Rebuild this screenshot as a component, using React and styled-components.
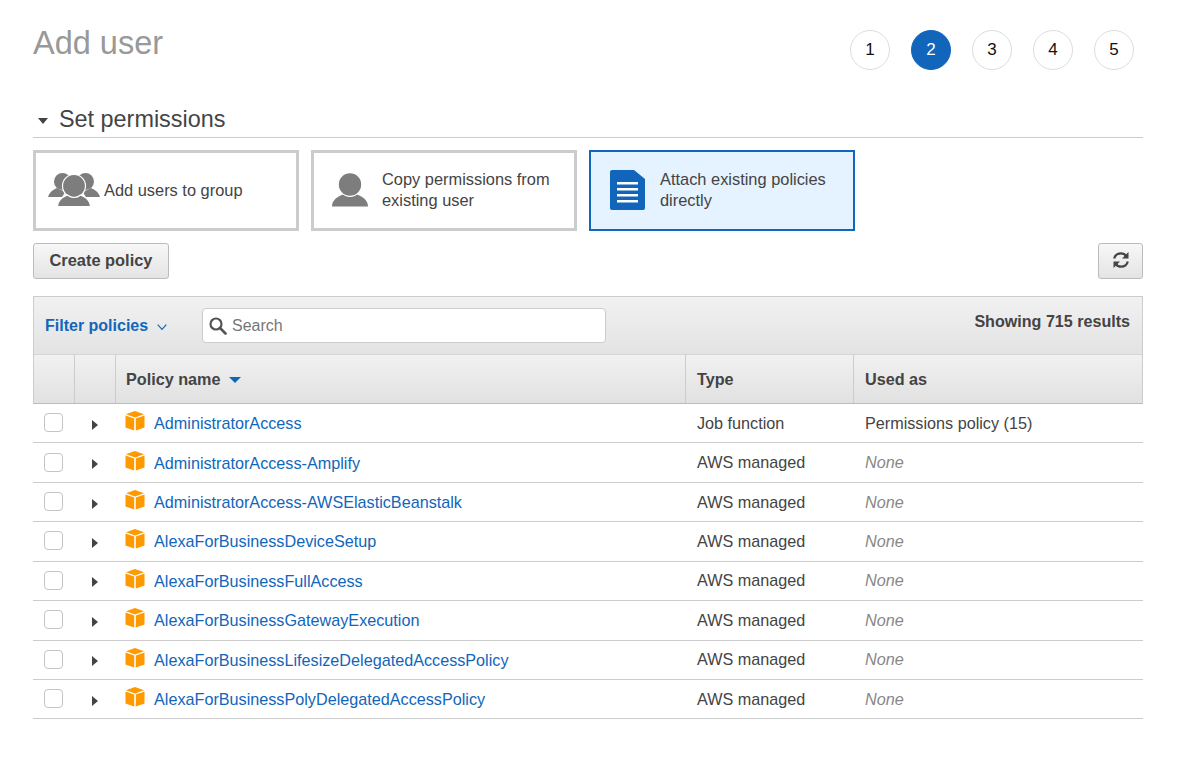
import React from 'react';
import styled, { createGlobalStyle } from 'styled-components';

const GlobalStyle = createGlobalStyle`
  html, body {
    margin: 0;
    padding: 0;
    background: #fff;
    font-family: "Liberation Sans", Arial, sans-serif;
  }
`;

const policies = [
  ['AdministratorAccess', 'Job function', 'Permissions policy (15)'],
  ['AdministratorAccess-Amplify', 'AWS managed', null],
  ['AdministratorAccess-AWSElasticBeanstalk', 'AWS managed', null],
  ['AlexaForBusinessDeviceSetup', 'AWS managed', null],
  ['AlexaForBusinessFullAccess', 'AWS managed', null],
  ['AlexaForBusinessGatewayExecution', 'AWS managed', null],
  ['AlexaForBusinessLifesizeDelegatedAccessPolicy', 'AWS managed', null],
  ['AlexaForBusinessPolyDelegatedAccessPolicy', 'AWS managed', null],
];

const GroupIcon = () => (
  <svg width="52" height="34" viewBox="0 0 52 34">
    <g fill="#7d7d7d">
      <circle cx="14.500" cy="8.500" r="8.500" />
      <circle cx="37.500" cy="8.500" r="8.500" />
      <path d="M0 24c1-4 4-7 9-9 3 2 6 3 9 3l-4 6H0z" />
      <path d="M52 24c-1-4-4-7-9-9-3 2-6 3-9 3l4 6h14z" />
    </g>
    <circle cx="26" cy="13" r="11.500" fill="#7d7d7d" stroke="#fff" strokeWidth="1.200" />
    <path d="M9.500 33.500c0-6 4-9 10-11.500 2 1.800 4 2.500 6.500 2.500s4.500-.7 6.500-2.500c6 2.500 10 5.500 10 11.500z" fill="#7d7d7d" stroke="#fff" strokeWidth="1.200" />
  </svg>
);

const UserIcon = () => (
  <svg width="36" height="34" viewBox="0 0 36 34">
    <path d="M0 33.500c0-7 6-10 12-12.500 2 1.500 4 2.500 6 2.500s4-1 6-2.500c6 2.500 12 5.500 12 12.500z" fill="#7d7d7d" />
    <circle cx="18" cy="11.500" r="11.800" fill="#7d7d7d" stroke="#fff" strokeWidth="1.200" />
  </svg>
);

const DocIcon = () => (
  <svg width="35" height="40" viewBox="0 0 35 40">
    <path d="M2 0h22l11 9v29a2 2 0 0 1-2 2H2a2 2 0 0 1-2-2V2a2 2 0 0 1 2-2z" fill="#1166bb" />
    <g fill="#fff">
      <rect x="7" y="12" width="21" height="2.500" />
      <rect x="7" y="18" width="21" height="2.500" />
      <rect x="7" y="24" width="21" height="2.500" />
      <rect x="7" y="30" width="21" height="2.500" />
    </g>
  </svg>
);

const CubeIcon = () => (
  <svg width="20" height="20" viewBox="0 0 20 20">
    <path d="M10 0l9 3.200-9 3.200-9-3.200z" fill="#f90" />
    <path d="M0.500 4.500l8.700 3v12L0.500 16.500z" fill="#f90" />
    <path d="M19.500 4.500l-8.700 3v12l8.700-3z" fill="#f90" />
  </svg>
);

const SearchIcon = () => (
  <svg width="18" height="18" viewBox="0 0 18 18">
    <circle cx="7" cy="7" r="5.500" fill="none" stroke="#555" strokeWidth="2.200" />
    <path d="M11 11l5.500 5.500" stroke="#555" strokeWidth="2.600" strokeLinecap="round" />
  </svg>
);

const RefreshIcon = () => (
  <svg width="18" height="18" viewBox="0 0 18 18">
    <g fill="none" stroke="#444" strokeWidth="2.200">
      <path d="M2.200 7.500C3 4.200 5.700 2.300 9 2.300c2.200 0 4 1 5.200 2.700" />
      <path d="M15.800 10.500C15 13.800 12.300 15.700 9 15.700c-2.200 0-4-1-5.200-2.700" />
    </g>
    <path d="M16.500 1v6.500H10z" fill="#444" />
    <path d="M1.500 17v-6.500H8z" fill="#444" />
  </svg>
);

const Page = styled.div`
  box-sizing: border-box;
  width: 1194px;
  height: 778px;
  padding: 0 51px 0 33px;
  overflow: hidden;
`;

const TopBar = styled.div`
  display: flex;
  justify-content: space-between;
  height: 101px;
`;

const Title = styled.h1`
  margin: 24px 0 0;
  font-size: 32.500px;
  line-height: 38px;
  font-weight: 400;
  color: #999;
`;

const Steps = styled.div`
  display: flex;
  gap: 21px;
  margin: 30px 9px 0 0;
`;

const Step = styled.div`
  box-sizing: border-box;
  width: 40px;
  height: 40px;
  border-radius: 50%;
  display: flex;
  align-items: center;
  justify-content: center;
  font-size: 17px;
  border: 1px solid ${(p) => (p.$active ? '#1166bb' : '#ddd')};
  background: ${(p) => (p.$active ? '#1166bb' : '#fff')};
  color: ${(p) => (p.$active ? '#fff' : '#111')};
`;

const SectionHeader = styled.div`
  display: flex;
  align-items: center;
  height: 36px;
  border-bottom: 1px solid #ccc;
  color: #444;
  font-size: 23.400px;
`;

const Caret = styled.span`
  width: 0;
  height: 0;
  margin: 4px 11px 0 5px;
  border-left: 5px solid transparent;
  border-right: 5px solid transparent;
  border-top: 6px solid #444;
`;

const Cards = styled.div`
  display: flex;
  gap: 12px;
  margin-top: 12px;
`;

const Card = styled.div`
  box-sizing: border-box;
  width: 266px;
  height: 81px;
  display: flex;
  align-items: center;
  padding-left: ${(p) => p.$pad}px;
  padding-bottom: 1px;
  gap: ${(p) => p.$gap}px;
  border: ${(p) => (p.$selected ? '2px solid #1166bb' : '3px solid #ccc')};
  background: ${(p) => (p.$selected ? '#e5f2ff' : '#fff')};
  color: #444;
  font-size: 16.400px;
  line-height: 21px;
`;

const ActionRow = styled.div`
  display: flex;
  justify-content: space-between;
  margin-top: 12px;
`;

const Button = styled.button`
  box-sizing: border-box;
  width: ${(p) => p.$width}px;
  height: 36px;
  padding: 0 0 2px;
  display: flex;
  align-items: center;
  justify-content: center;
  border: 1px solid #bbb;
  border-radius: 3px;
  background: linear-gradient(#f7f7f7, #e4e4e4);
  color: #444;
  font-family: inherit;
  font-size: 16.400px;
  font-weight: 700;
`;

const Table = styled.div`
  margin-top: 17px;
  width: 1110px;
`;

const FilterBar = styled.div`
  box-sizing: border-box;
  height: 59px;
  display: flex;
  align-items: center;
  padding: 0 12px 0 11px;
  background: linear-gradient(#f1f1f1, #e3e3e3);
  border: 1px solid #ccc;
  border-bottom: 1px solid #d5d5d5;
`;

const FilterLabel = styled.div`
  display: flex;
  align-items: center;
  width: 157px;
  color: #1166bb;
  font-size: 16px;
  font-weight: 700;
`;

const Chevron = styled.svg`
  margin: 3px 0 0 9px;
`;

const SearchBox = styled.div`
  box-sizing: border-box;
  width: 404px;
  height: 35px;
  display: flex;
  align-items: center;
  gap: 5px;
  padding-left: 6px;
  background: #fff;
  border: 1px solid #ccc;
  border-radius: 4px;
  color: #777;
  font-size: 16px;
`;

const ResultCount = styled.div`
  margin: -8px 0 0 auto;
  color: #444;
  font-size: 16.100px;
  font-weight: 700;
`;

const HeadRow = styled.div`
  box-sizing: border-box;
  display: grid;
  grid-template-columns: 40px 41px 570px 168px 1fr;
  height: 49px;
  background: linear-gradient(#f1f1f1, #e1e1e1);
  border-bottom: 1px solid #bbb;
  border-left: 1px solid #ccc;
  border-right: 1px solid #ccc;
`;

const HeadCell = styled.div`
  display: flex;
  align-items: center;
  padding-left: ${(p) => p.$pad ?? 11}px;
  color: #444;
  font-size: 16.200px;
  font-weight: 700;
  border-left: ${(p) => (p.$first ? 'none' : '1px solid #ccc')};
`;

const SortCaret = styled.span`
  width: 0;
  height: 0;
  margin: 2px 0 0 9px;
  border-left: 6px solid transparent;
  border-right: 6px solid transparent;
  border-top: 6px solid #1166bb;
`;

const Row = styled.div`
  box-sizing: border-box;
  display: grid;
  grid-template-columns: 41px 41px 570px 168px 1fr;
  height: 39.430px;
  align-items: center;
  border-bottom: 1px solid #ccc;
  color: #444;
  font-size: 16.200px;
`;

const CheckCell = styled.div`
  display: flex;
  justify-content: center;
  margin-top: -1px;
`;

const Checkbox = styled.span`
  box-sizing: border-box;
  width: 19px;
  height: 19px;
  background: #fff;
  border: 1px solid #c4c4c4;
  border-radius: 4px;
`;

const ExpandCell = styled.div`
  display: flex;
  justify-content: center;
  padding-top: 3px;
`;

const Expand = styled.span`
  width: 0;
  height: 0;
  border-top: 5.500px solid transparent;
  border-bottom: 5.500px solid transparent;
  border-left: 6.500px solid #444;
`;

const NameCell = styled.div`
  display: flex;
  align-items: center;
  gap: 9px;
  padding-left: 10px;
`;

const IconWrap = styled.span`
  display: flex;
  margin-top: -4px;
`;

const PolicyLink = styled.a`
  margin-top: 1px;
  color: #1166bb;
  text-decoration: none;
`;

const TextCell = styled.div`
  padding-left: 12px;
`;

const NoneText = styled.span`
  color: #888;
  font-style: italic;
`;

export default function App() {
  return (
    <Page>
      <GlobalStyle />
      <TopBar>
        <Title>Add user</Title>
        <Steps>
          {[1, 2, 3, 4, 5].map((n) => (
            <Step key={n} $active={n === 2}>{n}</Step>
          ))}
        </Steps>
      </TopBar>

      <SectionHeader>
        <Caret />
        Set permissions
      </SectionHeader>

      <Cards>
        <Card $pad={12} $gap={4}>
          <GroupIcon />
          <div>Add users to group</div>
        </Card>
        <Card $pad={18} $gap={14}>
          <UserIcon />
          <div>Copy permissions from<br />existing user</div>
        </Card>
        <Card $selected $pad={19} $gap={15}>
          <DocIcon />
          <div>Attach existing policies<br />directly</div>
        </Card>
      </Cards>

      <ActionRow>
        <Button $width={136}>Create policy</Button>
        <Button $width={45}><RefreshIcon /></Button>
      </ActionRow>

      <Table>
        <FilterBar>
          <FilterLabel>
            Filter policies
            <Chevron width="10" height="7" viewBox="0 0 10 7">
              <path d="M.7.7L5 5.300 9.300.7" fill="none" stroke="#1166bb" strokeWidth="1.200" />
            </Chevron>
          </FilterLabel>
          <SearchBox>
            <SearchIcon />
            Search
          </SearchBox>
          <ResultCount>Showing 715 results</ResultCount>
        </FilterBar>

        <HeadRow>
          <HeadCell $first />
          <HeadCell />
          <HeadCell $pad={10}>Policy name<SortCaret /></HeadCell>
          <HeadCell>Type</HeadCell>
          <HeadCell>Used as</HeadCell>
        </HeadRow>

        {policies.map(([name, type, used]) => (
          <Row key={name}>
            <CheckCell><Checkbox /></CheckCell>
            <ExpandCell><Expand /></ExpandCell>
            <NameCell>
              <IconWrap><CubeIcon /></IconWrap>
              <PolicyLink href="#">{name}</PolicyLink>
            </NameCell>
            <TextCell>{type}</TextCell>
            <TextCell>{used || <NoneText>None</NoneText>}</TextCell>
          </Row>
        ))}
      </Table>
    </Page>
  );
}
